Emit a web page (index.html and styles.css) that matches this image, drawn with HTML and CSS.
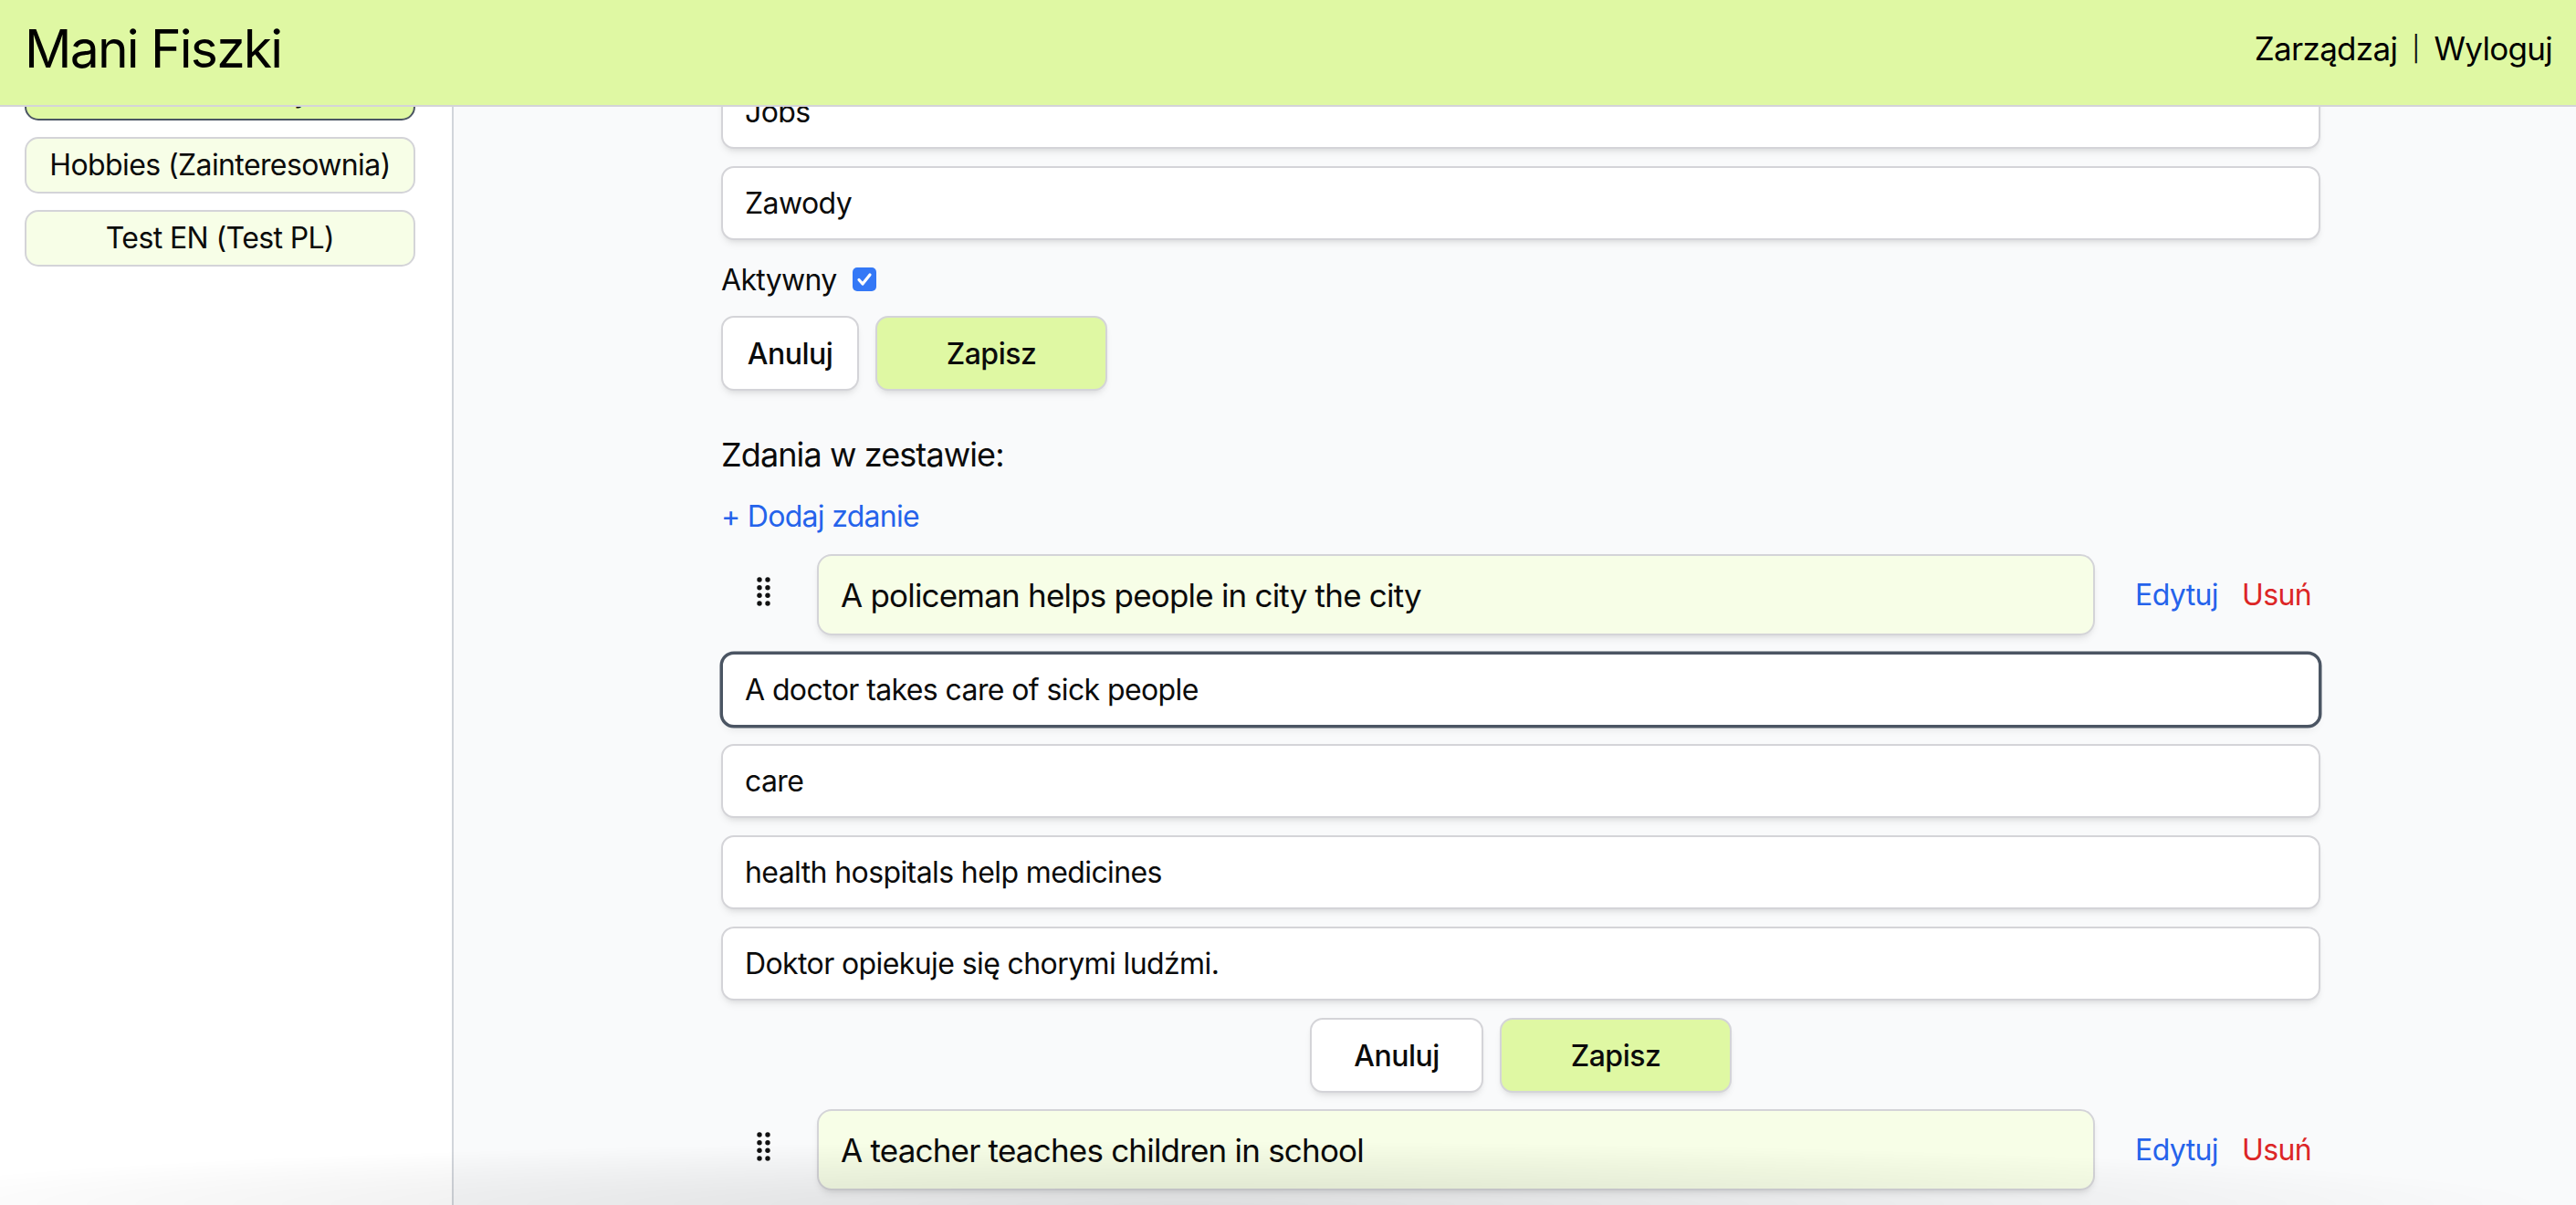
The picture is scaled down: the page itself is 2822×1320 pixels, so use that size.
FILE: index.html
```html
<!DOCTYPE html>
<html lang="pl">
<head>
<meta charset="utf-8">
<title>Mani Fiszki</title>
<link rel="stylesheet" href="styles.css">
</head>
<body>
<header class="topbar">
  <h1 class="brand">Mani Fiszki</h1>
  <nav class="topnav">
    <a class="topnav-link" href="#">Zarządzaj</a>
    <span class="topnav-sep">|</span>
    <a class="topnav-link" href="#">Wyloguj</a>
  </nav>
</header>

<div class="layout">
  <aside class="sidebar">
    <button class="deck deck-active">Jobs (Zawody)</button>
    <button class="deck">Hobbies (Zainteresownia)</button>
    <button class="deck">Test EN (Test PL)</button>
  </aside>

  <main class="main">
    <div class="column">
      <input class="field" type="text" value="Jobs">
      <input class="field gap-19" type="text" value="Zawody">

      <label class="active-row gap-19">
        <span>Aktywny</span>
        <span class="checkbox">
          <svg viewBox="0 0 26 26" width="26" height="26"><path d="M7 13.5l4 4.5 8-10" fill="none" stroke="#fff" stroke-width="3.2" stroke-linecap="round" stroke-linejoin="round"/></svg>
        </span>
      </label>

      <div class="btn-row gap-16">
        <button class="btn btn-cancel-sm">Anuluj</button>
        <button class="btn btn-save">Zapisz</button>
      </div>

      <h2 class="section-title">Zdania w zestawie:</h2>
      <a class="add-link" href="#">+ Dodaj zdanie</a>

      <div class="sentence gap-17">
        <span class="handle">
          <svg viewBox="0 0 15 32" width="15" height="32"><g fill="#111"><circle cx="3" cy="3" r="2.7"/><circle cx="12" cy="3" r="2.7"/><circle cx="3" cy="11.7" r="2.7"/><circle cx="12" cy="11.7" r="2.7"/><circle cx="3" cy="20.3" r="2.7"/><circle cx="12" cy="20.3" r="2.7"/><circle cx="3" cy="29" r="2.7"/><circle cx="12" cy="29" r="2.7"/></g></svg>
        </span>
        <div class="sentence-card">A policeman helps people in city the city</div>
        <div class="sentence-actions">
          <a class="act-edit" href="#">Edytuj</a>
          <a class="act-del" href="#">Usuń</a>
        </div>
      </div>

      <form class="edit-form gap-19">
        <input class="field field-focus" type="text" value="A doctor takes care of sick people">
        <input class="field" type="text" value="care">
        <input class="field" type="text" value="health hospitals help medicines">
        <input class="field" type="text" value="Doktor opiekuje się chorymi ludźmi.">
        <div class="btn-row btn-row-center">
          <button type="button" class="btn btn-cancel-lg">Anuluj</button>
          <button type="button" class="btn btn-save">Zapisz</button>
        </div>
      </form>

      <div class="sentence gap-18">
        <span class="handle">
          <svg viewBox="0 0 15 32" width="15" height="32"><g fill="#111"><circle cx="3" cy="3" r="2.7"/><circle cx="12" cy="3" r="2.7"/><circle cx="3" cy="11.7" r="2.7"/><circle cx="12" cy="11.7" r="2.7"/><circle cx="3" cy="20.3" r="2.7"/><circle cx="12" cy="20.3" r="2.7"/><circle cx="3" cy="29" r="2.7"/><circle cx="12" cy="29" r="2.7"/></g></svg>
        </span>
        <div class="sentence-card">A teacher teaches children in school</div>
        <div class="sentence-actions">
          <a class="act-edit" href="#">Edytuj</a>
          <a class="act-del" href="#">Usuń</a>
        </div>
      </div>
    </div>
  </main>
</div>

<div class="bottom-fade"></div>
</body>
</html>
```

FILE: styles.css
```css
* {
  box-sizing: border-box;
}

html, body {
  margin: 0;
  padding: 0;
}

body {
  font-family: Inter, "Noto Sans", "Liberation Sans", sans-serif;
  color: #0b0b0b;
  background: #f9fafb;
  overflow: hidden;
  height: 1320px;
}

a {
  text-decoration: none;
}

button, input {
  font-family: inherit;
}

/* header */
.topbar {
  position: fixed;
  top: 0;
  left: 0;
  right: 0;
  height: 117px;
  z-index: 10;
  background: #dff8a3;
  border-bottom: 2px solid #d4d4d8;
  display: flex;
  align-items: center;
  justify-content: space-between;
  padding: 0 26px 8px 27px;
}

.brand {
  margin: 0;
  font-size: 57px;
  font-weight: 400;
  line-height: 1;
  letter-spacing: -1.8px;
  color: #000;
}

.topnav {
  display: flex;
  align-items: center;
  gap: 16px;
  font-size: 35px;
  line-height: 1;
  letter-spacing: -0.7px;
}

.topnav-link {
  color: #000;
}

.topnav-sep {
  color: #111;
  font-size: 27px;
}

/* layout */
.layout {
  display: flex;
  min-height: 1320px;
}

.sidebar {
  width: 497px;
  flex: none;
  background: #fff;
  border-right: 2px solid #d1d5db;
  padding: 70px 40px 0 27px;
  display: flex;
  flex-direction: column;
  gap: 18px;
}

.deck {
  height: 62px;
  width: 100%;
  background: #f7fee7;
  border: 2px solid #d4d4d8;
  border-radius: 15px;
  font-size: 32px;
  line-height: 48px;
  letter-spacing: -0.6px;
  color: #0b0b0b;
  text-align: center;
  padding: 0;
}

.deck-active {
  background: #dff8a3;
  border-color: #4b5563;
}

.main {
  flex: 1;
  padding: 82px 280px 60px 293px;
}

.column {
  display: flex;
  flex-direction: column;
}

.gap-16 { margin-top: 16px; }
.gap-17 { margin-top: 17px; }
.gap-18 { margin-top: 18px; }
.gap-19 { margin-top: 19px; }

.field {
  display: block;
  width: 100%;
  height: 81px;
  background: #fff;
  border: 2px solid #d4d4d8;
  border-radius: 14px;
  padding: 0 24px;
  font-size: 32px;
  letter-spacing: -0.6px;
  color: #0b0b0b;
  box-shadow: 0 6px 10px -3px rgba(0, 0, 0, 0.09), 0 3px 6px -3px rgba(0, 0, 0, 0.08);
  outline: none;
}

.field-focus {
  border-color: #4b5563;
  box-shadow: 0 0 0 1.5px #4b5563, 0 6px 10px -3px rgba(0, 0, 0, 0.09);
}

.active-row {
  display: flex;
  align-items: center;
  gap: 18px;
  height: 48px;
  font-size: 32px;
  letter-spacing: -0.7px;
}

.checkbox {
  width: 26px;
  height: 26px;
  border-radius: 5px;
  background: #3478f6;
  display: flex;
  align-items: center;
  justify-content: center;
}

.checkbox svg {
  display: block;
}

.btn-row {
  display: flex;
  gap: 18px;
}

.btn-row-center {
  justify-content: center;
}

.btn {
  height: 82px;
  border: 2px solid #d4d4d8;
  border-radius: 14px;
  background: #fff;
  font-size: 32px;
  font-weight: 550;
  letter-spacing: -0.5px;
  color: #0b0b0b;
  padding: 0;
  text-align: center;
  box-shadow: 0 6px 10px -3px rgba(0, 0, 0, 0.09), 0 3px 6px -3px rgba(0, 0, 0, 0.08);
}

.btn-cancel-sm { width: 151px; }
.btn-cancel-lg { width: 190px; }

.btn-save {
  width: 254px;
  background: #dff8a3;
}

.section-title {
  margin: 42px 0 0;
  font-size: 36px;
  font-weight: 400;
  line-height: 56px;
  letter-spacing: -0.9px;
}

.add-link {
  margin-top: 16px;
  align-self: flex-start;
  font-size: 32px;
  line-height: 48px;
  color: #2563eb;
  letter-spacing: -0.7px;
}

.sentence {
  display: flex;
  align-items: center;
  padding-left: 39px;
}

.handle {
  width: 15px;
  flex: none;
  margin-right: 51px;
  margin-top: -8px;
  display: flex;
}

.handle svg {
  display: block;
}

.sentence-card {
  flex: 1;
  height: 89px;
  background: #f7fee7;
  border: 2px solid #d4d4d8;
  border-radius: 16px;
  padding: 0 24px;
  display: flex;
  align-items: center;
  font-size: 35px;
  letter-spacing: -0.8px;
  box-shadow: 0 6px 10px -3px rgba(0, 0, 0, 0.09), 0 3px 6px -3px rgba(0, 0, 0, 0.08);
}

.sentence-actions {
  width: 247px;
  flex: none;
  padding-left: 44px;
  display: flex;
  gap: 26px;
  font-size: 32px;
  letter-spacing: -0.6px;
}

.act-edit { color: #2563eb; }
.act-del { color: #dc2626; }

.edit-form {
  display: flex;
  flex-direction: column;
  gap: 19px;
  margin-bottom: 0;
}

.bottom-fade {
  position: fixed;
  left: 0;
  right: 0;
  bottom: 0;
  height: 70px;
  pointer-events: none;
  z-index: 20;
  background: radial-gradient(ellipse 1500px 70px at 1300px 100%, rgba(0, 0, 0, 0.11), rgba(0, 0, 0, 0) 100%);
}
```
